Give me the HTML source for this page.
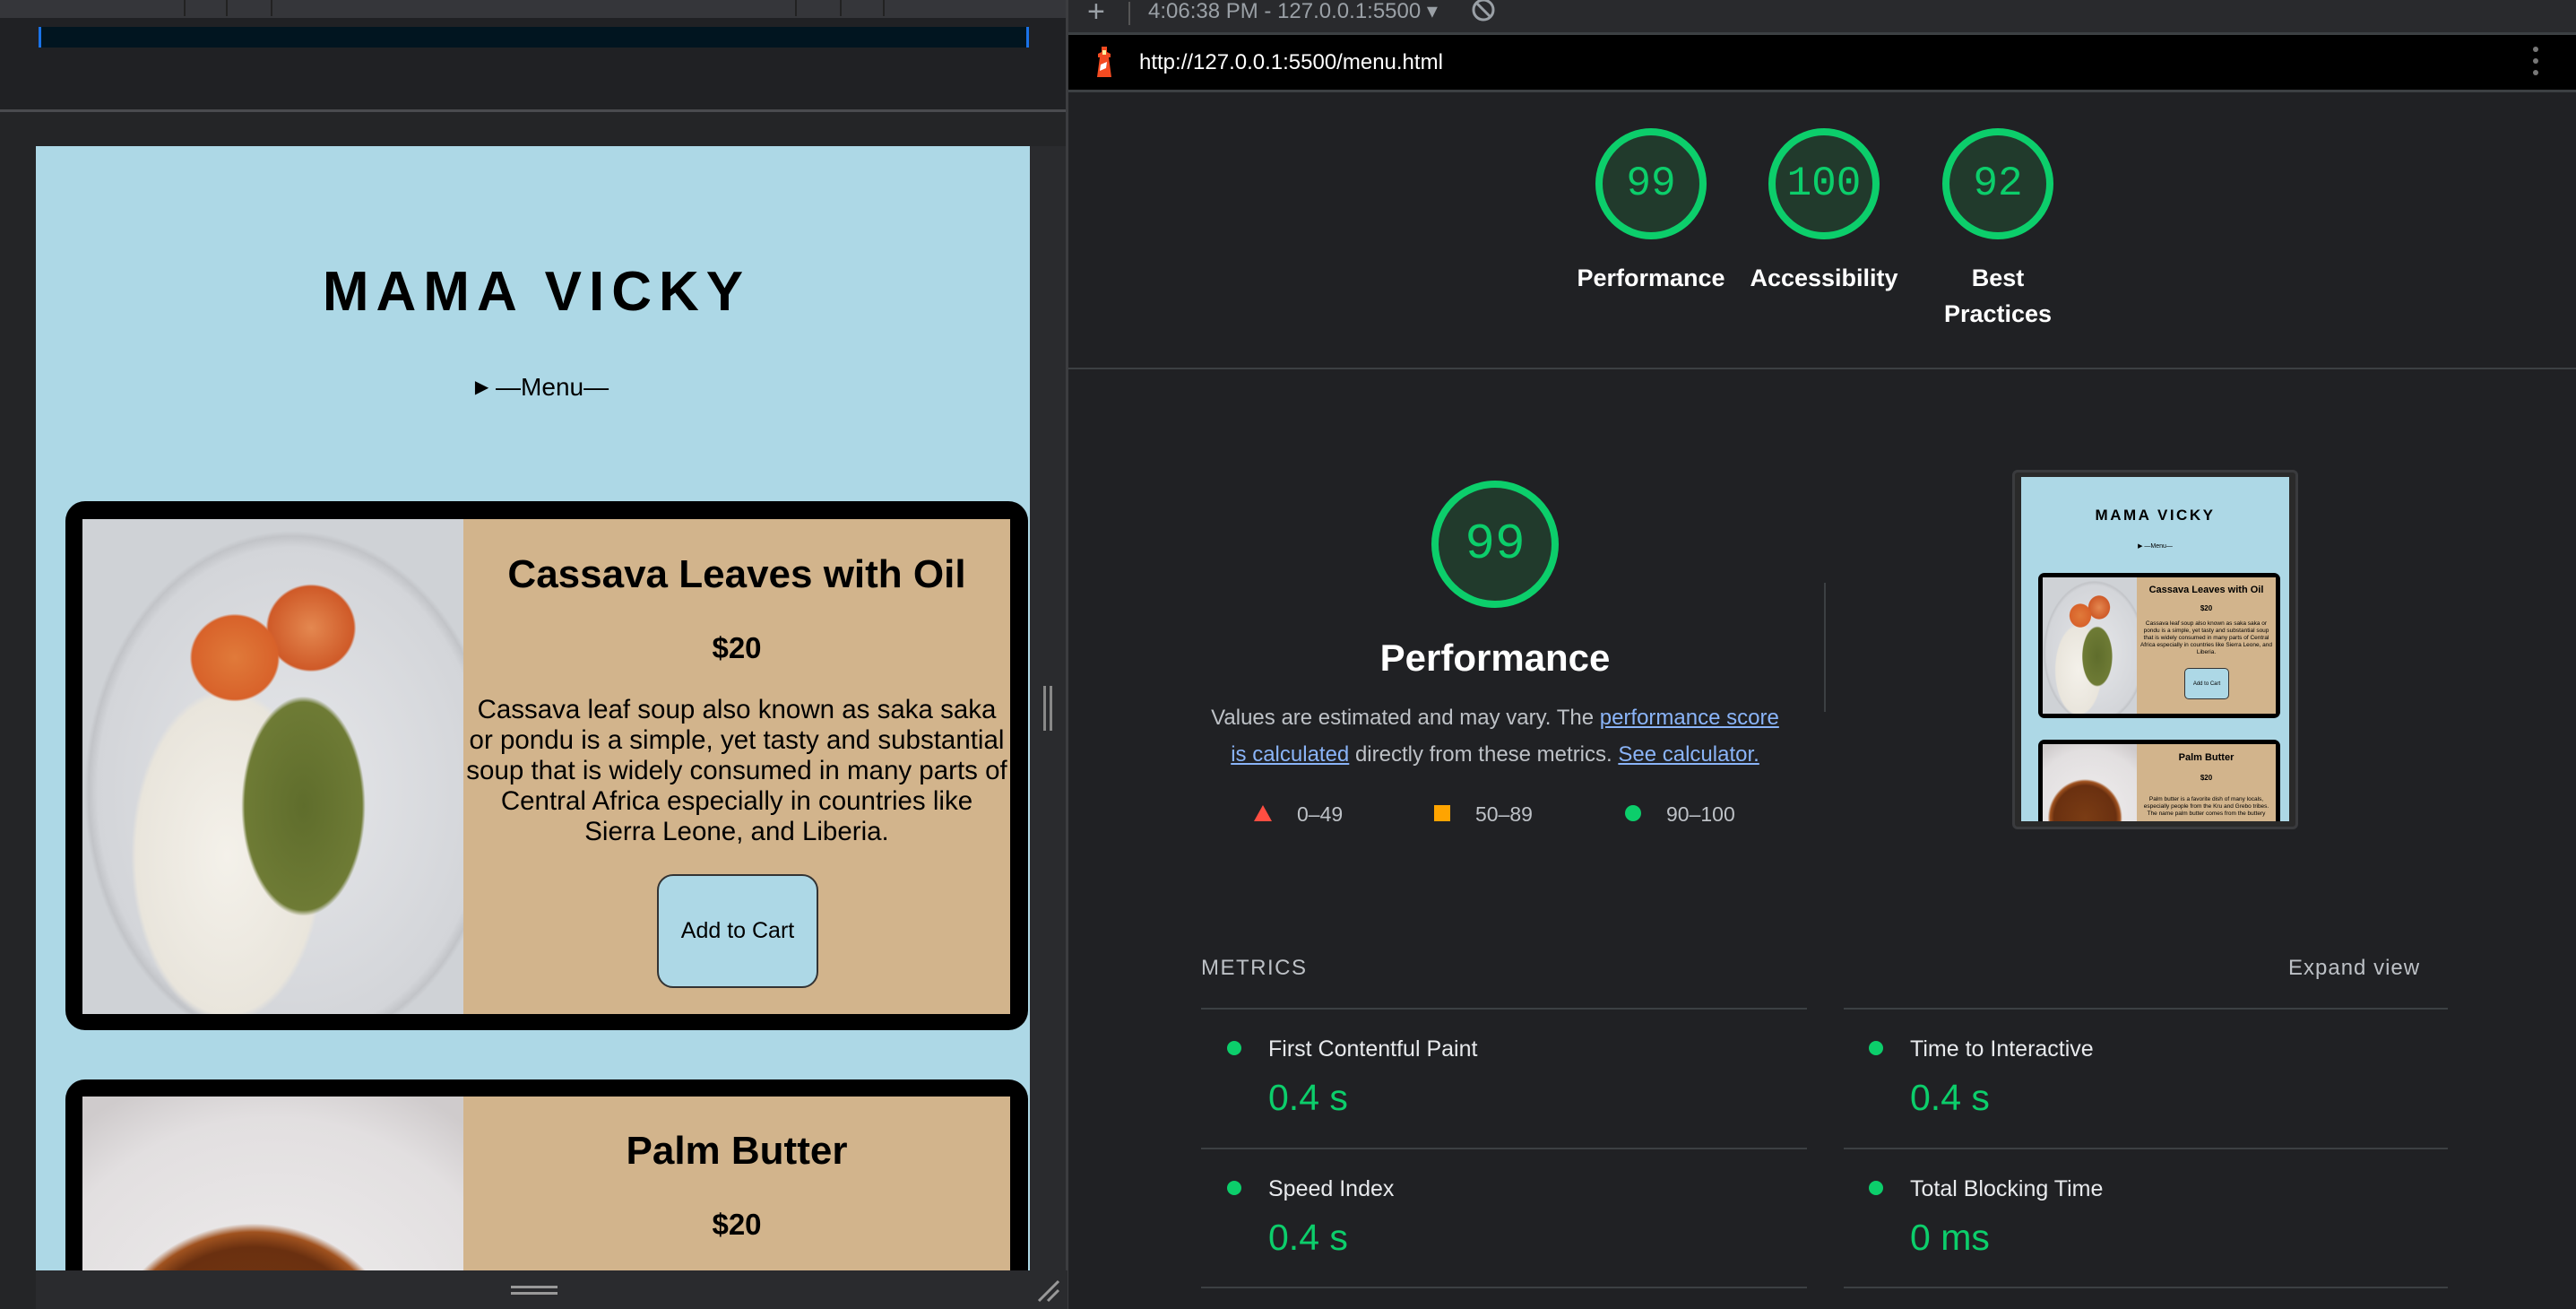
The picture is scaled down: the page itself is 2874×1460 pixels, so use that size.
<!DOCTYPE html>
<html><head><meta charset="utf-8"><style>
*{margin:0;padding:0;box-sizing:border-box}
html{overflow:hidden;width:2874px;height:1460px}
body{width:2874px;height:1460px;background:#202124;position:relative;overflow:hidden;font-family:"Liberation Sans",sans-serif}
.a{position:absolute}
.c{text-align:center;white-space:nowrap}
.plate{background:radial-gradient(ellipse 22% 30% at 58% 58%,#5f6d2c 0,#6e7b35 70%,transparent 74%),radial-gradient(ellipse 16% 12% at 40% 28%,#e07a3a 0,#d8622a 70%,transparent 74%),radial-gradient(ellipse 16% 12% at 60% 22%,#e48850 0,#cf5a28 70%,transparent 74%),radial-gradient(ellipse 30% 40% at 38% 68%,#f4f1ea 0,#e9e5dc 80%,transparent 84%),radial-gradient(ellipse 58% 56% at 55% 55%,#e6e7ea 0,#d3d5d9 88%,#c2c4c8 92%,transparent 94%),#cfd2d6}
.stew{background:radial-gradient(ellipse 60% 60% at 45% 75%,#7a3c14 0,#6a3010 55%,#a0521f 62%,transparent 66%),radial-gradient(ellipse 80% 80% at 50% 70%,#f0eeee 0,#e2dfe0 80%,#cfcbcc 100%)}
.gauge{position:absolute;width:124px;height:124px;border-radius:50%;border:8px solid #0cce6b;background:#213a2c;color:#0cce6b;font-family:"Liberation Mono",monospace;font-size:46px;display:flex;align-items:center;justify-content:center}
.gl{position:absolute;color:#fff;font-size:28px;text-align:center;width:240px;line-height:40px}
.ml{color:#e8eaed;font-size:25px}
.mv{color:#0cce6b;font-size:41px}
.dot{width:16px;height:16px;border-radius:50%;background:#0cce6b}
.hl{height:2px;background:#3c4043}
</style></head><body>
<div class="a" style="left:0;top:0;width:1191px;height:20px;background:#35363a"></div>
<div class="a" style="left:205px;top:0;width:2px;height:18px;background:#222"></div>
<div class="a" style="left:252px;top:0;width:2px;height:18px;background:#222"></div>
<div class="a" style="left:302px;top:0;width:2px;height:18px;background:#222"></div>
<div class="a" style="left:887px;top:0;width:2px;height:18px;background:#222"></div>
<div class="a" style="left:937px;top:0;width:2px;height:18px;background:#222"></div>
<div class="a" style="left:985px;top:0;width:2px;height:18px;background:#222"></div>
<div class="a" style="left:43px;top:30px;width:1105px;height:23px;background:#011520;border-left:3px solid #1a73e8;border-right:3px solid #1a73e8"></div>
<div class="a" style="left:0;top:122px;width:1191px;height:3px;background:#4a4b4f"></div>
<div class="a" style="left:0;top:125px;width:1191px;height:1335px;background:#242527"></div>
<div class="a" style="left:1149px;top:163px;width:42px;height:1254px;background:#2a2b2e"></div>
<div class="a" style="left:1164px;top:765px;width:3px;height:50px;background:#888"></div><div class="a" style="left:1171px;top:765px;width:3px;height:50px;background:#888"></div>
<div class="a" style="left:1189px;top:0;width:3px;height:1460px;background:#3c3d40"></div>

<div class="a" style="left:40px;top:163px;width:1109px;height:1254px;background:#add8e6;overflow:hidden">
 <div class="a c" style="left:0;width:1109px;top:127px;font-size:62px;font-weight:bold;letter-spacing:8px;color:#000;padding-left:8px">MAMA VICKY</div>
 <div class="a c" style="left:10px;width:1109px;top:253px;font-size:28px;color:#000"><span style="font-size:20px;vertical-align:3px">▶</span> —Menu—</div>
 <div class="a" style="left:33px;top:396px;width:1074px;height:590px;background:#000;border-radius:22px">
  <div class="a plate" style="left:19px;top:20px;width:425px;height:552px"></div>
  <div class="a" style="left:444px;top:20px;width:610px;height:552px;background:#d2b48c">
   <div class="a c" style="left:0;width:610px;top:37px;font-size:44px;font-weight:bold">Cassava Leaves with Oil</div>
   <div class="a c" style="left:0;width:610px;top:125px;font-size:33px;font-weight:bold">$20</div>
   <div class="a c" style="left:0;width:610px;top:196px;font-size:29.5px;line-height:34px">Cassava leaf soup also known as saka saka<br>or pondu is a simple, yet tasty and substantial<br>soup that is widely consumed in many parts of<br>Central Africa especially in countries like<br>Sierra Leone, and Liberia.</div>
   <div class="a" style="left:216px;top:396px;width:180px;height:127px;background:#add8e6;border:2px solid #333;border-radius:18px;font-size:25px;display:flex;align-items:center;justify-content:center">Add to Cart</div>
  </div>
 </div>
 <div class="a" style="left:33px;top:1041px;width:1074px;height:400px;background:#000;border-radius:22px">
  <div class="a stew" style="left:19px;top:19px;width:425px;height:400px"></div>
  <div class="a" style="left:444px;top:19px;width:610px;height:400px;background:#d2b48c">
   <div class="a c" style="left:0;width:610px;top:36px;font-size:44px;font-weight:bold">Palm Butter</div>
   <div class="a c" style="left:0;width:610px;top:124px;font-size:33px;font-weight:bold">$20</div>
  </div>
 </div>
</div>
<div class="a" style="left:40px;top:1417px;width:1151px;height:43px;background:#2a2b2e"></div>
<div class="a" style="left:570px;top:1434px;width:52px;height:3px;background:#999"></div><div class="a" style="left:570px;top:1441px;width:52px;height:3px;background:#999"></div>
<svg class="a" style="left:1155px;top:1425px" width="28" height="28"><path d="M4 26L26 4M14 26L26 14" stroke="#999" stroke-width="3"/></svg>

<div class="a" style="left:1192px;top:0;width:1682px;height:36px;background:#292a2d"></div>
<div class="a" style="left:1213px;top:-6px;color:#9aa0a6;font-size:34px">+</div>
<div class="a" style="left:1259px;top:2px;width:2px;height:26px;background:#555"></div>
<div class="a" style="left:1281px;top:-2px;color:#9aa0a6;font-size:24px">4:06:38 PM - 127.0.0.1:5500 ▾</div>
<svg class="a" style="left:1640px;top:-2px" width="30" height="30"><circle cx="15" cy="13" r="11" stroke="#9aa0a6" stroke-width="3" fill="none"/><path d="M8 6L22 20" stroke="#9aa0a6" stroke-width="3"/></svg>
<div class="a" style="left:1192px;top:36px;width:1682px;height:3px;background:#3c4043"></div>
<div class="a" style="left:1192px;top:39px;width:1682px;height:61px;background:#000"></div>
<div class="a" style="left:1192px;top:100px;width:1682px;height:3px;background:#3c4043"></div>
<svg class="a" style="left:1220px;top:50px" width="24" height="38"><path d="M9 2L15 2L15 8L19 10L19 14L17 14L20 36L4 36L7 14L5 14L5 10L9 8Z" fill="#f44b21"/><rect x="10" y="6" width="4" height="5" fill="#fff3a0"/><path d="M8 22L15 19L14 26L7 29Z" fill="#fff"/></svg>
<div class="a" style="left:1271px;top:56px;color:#fff;font-size:24px">http://127.0.0.1:5500/menu.html</div>
<div class="a" style="left:2826px;top:52px;width:6px;height:6px;border-radius:3px;background:#777"></div>
<div class="a" style="left:2826px;top:65px;width:6px;height:6px;border-radius:3px;background:#777"></div>
<div class="a" style="left:2826px;top:78px;width:6px;height:6px;border-radius:3px;background:#777"></div>

<div class="gauge" style="left:1780px;top:143px">99</div>
<div class="gauge" style="left:1973px;top:143px">100</div>
<div class="gauge" style="left:2167px;top:143px">92</div>
<div class="gl" style="left:1722px;top:290px;font-weight:bold;font-size:27px">Performance</div>
<div class="gl" style="left:1915px;top:290px;font-weight:bold;font-size:27px">Accessibility</div>
<div class="gl" style="left:2109px;top:290px;font-weight:bold;font-size:27px">Best<br>Practices</div>
<div class="a hl" style="left:1192px;top:410px;width:1682px"></div>

<div class="gauge" style="left:1597px;top:536px;width:142px;height:142px;font-size:56px">99</div>
<div class="a c" style="left:1468px;width:400px;top:710px;color:#fff;font-size:42px;font-weight:bold">Performance</div>
<div class="a c" style="left:1300px;width:736px;top:780px;color:#bdc1c6;font-size:24px;line-height:41px">Values are estimated and may vary. The <span style="color:#8ab4f8;text-decoration:underline">performance score<br>is calculated</span> directly from these metrics. <span style="color:#8ab4f8;text-decoration:underline">See calculator.</span></div>
<svg class="a" style="left:1398px;top:897px" width="22" height="20"><path d="M11 1L21 19L1 19Z" fill="#ff4e42"/></svg>
<div class="a" style="left:1447px;top:895px;color:#bdc1c6;font-size:23px">0–49</div>
<div class="a" style="left:1600px;top:898px;width:18px;height:18px;background:#ffa400"></div>
<div class="a" style="left:1646px;top:895px;color:#bdc1c6;font-size:23px">50–89</div>
<div class="a" style="left:1813px;top:898px;width:18px;height:18px;border-radius:50%;background:#0cce6b"></div>
<div class="a" style="left:1859px;top:895px;color:#bdc1c6;font-size:23px">90–100</div>
<div class="a" style="left:2035px;top:650px;width:2px;height:144px;background:#3c4043"></div>

<div class="a" style="left:2245px;top:524px;width:319px;height:401px;background:#2a2a2a;border:3px solid #3a3b3e;border-radius:6px"></div>
<div class="a" style="left:2255px;top:532px;width:299px;height:384px;background:#add8e6;overflow:hidden">
 <div class="a c" style="left:0;width:299px;top:33px;font-size:17px;font-weight:bold;letter-spacing:2.5px">MAMA VICKY</div>
 <div class="a c" style="left:0;width:299px;top:73px;font-size:7px">▶ —Menu—</div>
 <div class="a" style="left:19px;top:107px;width:270px;height:162px;background:#000;border-radius:7px">
  <div class="a plate" style="left:5px;top:5px;width:105px;height:152px"></div>
  <div class="a" style="left:110px;top:5px;width:155px;height:152px;background:#d2b48c">
   <div class="a c" style="left:0;width:155px;top:8px;font-size:11px;font-weight:bold">Cassava Leaves with Oil</div>
   <div class="a c" style="left:0;width:155px;top:30px;font-size:8px;font-weight:bold">$20</div>
   <div class="a" style="left:2px;width:151px;top:48px;font-size:6.5px;line-height:8px;text-align:center">Cassava leaf soup also known as saka saka or pondu is a simple, yet tasty and substantial soup that is widely consumed in many parts of Central Africa especially in countries like Sierra Leone, and Liberia.</div>
   <div class="a" style="left:53px;top:101px;width:50px;height:35px;background:#add8e6;border:1px solid #333;border-radius:5px;font-size:6px;display:flex;align-items:center;justify-content:center">Add to Cart</div>
  </div>
 </div>
 <div class="a" style="left:19px;top:293px;width:270px;height:110px;background:#000;border-radius:7px">
  <div class="a stew" style="left:5px;top:5px;width:105px;height:110px"></div>
  <div class="a" style="left:110px;top:5px;width:155px;height:110px;background:#d2b48c">
   <div class="a c" style="left:0;width:155px;top:9px;font-size:11px;font-weight:bold">Palm Butter</div>
   <div class="a c" style="left:0;width:155px;top:33px;font-size:8px;font-weight:bold">$20</div>
   <div class="a" style="left:2px;width:151px;top:58px;font-size:6.5px;line-height:8px;text-align:center">Palm butter is a favorite dish of many locals, especially people from the Kru and Grebo tribes. The name palm butter comes from the buttery</div>
  </div>
 </div>
</div>

<div class="a" style="left:1340px;top:1066px;color:#bdc1c6;font-size:24px;letter-spacing:1.5px">METRICS</div>
<div class="a" style="left:2553px;top:1066px;color:#bdc1c6;font-size:24px;letter-spacing:1px">Expand view</div>
<div class="a hl" style="left:1340px;top:1124px;width:676px"></div>
<div class="a hl" style="left:2057px;top:1124px;width:674px"></div>
<div class="a hl" style="left:1340px;top:1280px;width:676px"></div>
<div class="a hl" style="left:2057px;top:1280px;width:674px"></div>
<div class="a hl" style="left:1340px;top:1435px;width:676px"></div>
<div class="a hl" style="left:2057px;top:1435px;width:674px"></div>

<div class="a dot" style="left:1369px;top:1161px"></div><div class="a ml" style="left:1415px;top:1156px">First Contentful Paint</div><div class="a mv" style="left:1415px;top:1201px">0.4 s</div>
<div class="a dot" style="left:2085px;top:1161px"></div><div class="a ml" style="left:2131px;top:1156px">Time to Interactive</div><div class="a mv" style="left:2131px;top:1201px">0.4 s</div>
<div class="a dot" style="left:1369px;top:1317px"></div><div class="a ml" style="left:1415px;top:1312px">Speed Index</div><div class="a mv" style="left:1415px;top:1357px">0.4 s</div>
<div class="a dot" style="left:2085px;top:1317px"></div><div class="a ml" style="left:2131px;top:1312px">Total Blocking Time</div><div class="a mv" style="left:2131px;top:1357px">0 ms</div>
</body></html>
